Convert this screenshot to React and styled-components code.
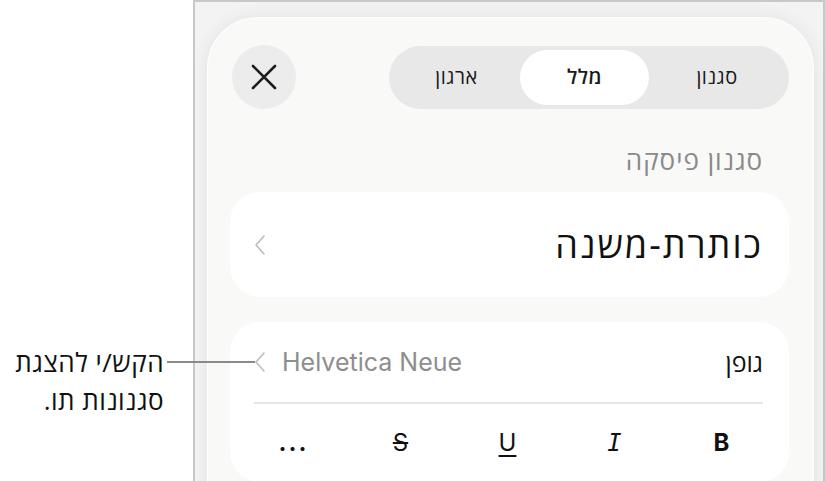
import * as React from 'react';
import styled, { createGlobalStyle } from 'styled-components';

const GlobalStyle = createGlobalStyle`
  html, body {
    margin: 0;
    padding: 0;
    background: #fff;
  }
  body {
    font-family: "Open Sans", "Liberation Sans", "DejaVu Sans", sans-serif;
    color: #111;
  }
`;

const Page = styled.div`
  position: relative;
  width: 825px;
  height: 481px;
  overflow: hidden;
  display: flex;
`;

const Frame = styled.div`
  margin-left: 193px;
  width: 626px;
  height: 500px;
  border: 2px solid #c8c8c8;
  border-bottom: none;
  background: #f3f3f3;
  padding: 15px 9px 0 12px;
  box-sizing: content-box;
`;

const Panel = styled.div`
  direction: rtl;
  height: 520px;
  background: #f9f9f8;
  border-radius: 50px;
  border: 1px solid #fff;
  box-shadow: 0 0 18px rgba(0, 0, 0, 0.07);
  padding: 27px 24px 0 22px;
  display: flex;
  flex-direction: column;
`;

const Header = styled.div`
  height: 64px;
  display: flex;
  align-items: center;
  justify-content: space-between;
`;

const Segmented = styled.div`
  width: 400px;
  height: 63px;
  border-radius: 32px;
  background: #e8e8e8;
  display: grid;
  grid-template-columns: 136px 129px 1fr;
  align-items: center;
  padding: 0 4px;
  box-sizing: border-box;
`;

const Tab = styled.div`
  height: 55px;
  border-radius: 28px;
  display: flex;
  align-items: center;
  justify-content: center;
  font-size: 20px;
  line-height: 1;
  letter-spacing: 0.5px;
  color: #1a1a1a;
  background: ${(p) => (p.$active ? '#fff' : 'transparent')};
  font-weight: ${(p) => (p.$active ? 600 : 400)};
`;

const CloseButton = styled.div`
  width: 64px;
  height: 64px;
  margin-left: 2px;
  border-radius: 50%;
  background: #ececec;
  display: flex;
  align-items: center;
  justify-content: center;
`;

const SectionLabel = styled.div`
  margin: 36px 26px 0 0;
  font-size: 26px;
  letter-spacing: 1px;
  color: #8a8a8a;
  height: 30px;
  line-height: 30px;
`;

const Card = styled.div`
  background: #fff;
  border-radius: 30px;
  padding: 0 26px 0 24px;
  margin-top: ${(p) => p.$top}px;
`;

const StyleRow = styled.div`
  height: 105px;
  display: flex;
  align-items: center;
  justify-content: space-between;
  font-size: 36px;
  letter-spacing: 2px;
  line-height: 1;
  color: #111;
`;

const FontRow = styled.div`
  height: 80px;
  display: flex;
  align-items: center;
  justify-content: space-between;
  border-bottom: 2px solid #e6e6e6;
  font-size: 25px;
  line-height: 1;
`;

const Value = styled.div`
  display: flex;
  align-items: center;
  gap: 16px;
  direction: ltr;
  font-family: Inter, "Liberation Sans", sans-serif;
  font-size: 25px;
  color: #8e8e8e;
`;

const FormatRow = styled.div`
  direction: ltr;
  display: grid;
  grid-template-columns: repeat(5, 1fr);
  margin: 0 -12px 0 -14px;
  height: 78px;
  align-items: center;
`;

const FormatButton = styled.div`
  text-align: center;
  font-size: 24px;
  line-height: 1;
  color: #111;
  font-family: ${(p) => p.$font || 'Inter, "Liberation Sans", sans-serif'};
  font-weight: ${(p) => (p.$bold ? 700 : 400)};
  font-style: ${(p) => (p.$italic ? 'italic' : 'normal')};
  text-decoration: ${(p) => p.$deco || 'none'};
  text-decoration-thickness: 2px;
  text-underline-offset: 4px;
  letter-spacing: ${(p) => (p.$spaced ? '2px' : 'normal')};
`;

const Callout = styled.div`
  position: absolute;
  left: 0;
  top: 343px;
  width: 164px;
  direction: rtl;
  text-align: right;
  font-size: 26px;
  letter-spacing: 0.5px;
  line-height: 38px;
  color: #111;
`;

const Leader = styled.div`
  position: absolute;
  left: 167px;
  top: 361px;
  width: 88px;
  height: 2px;
  background: #8a8a8a;
`;

const Chevron = ({ color = '#bcbcbc' }) => (
  <svg width="12" height="22" viewBox="0 0 12 22">
    <path d="M10 2 L2 11 L10 20" fill="none" stroke={color} strokeWidth="1.6" strokeLinecap="round" strokeLinejoin="round" />
  </svg>
);

const CloseIcon = () => (
  <svg width="28" height="28" viewBox="0 0 28 28">
    <path d="M3 3 L25 25 M25 3 L3 25" stroke="#1c1c1c" strokeWidth="2.6" strokeLinecap="round" />
  </svg>
);

export default function App() {
  return (
    <Page>
      <GlobalStyle />
      <Frame>
        <Panel>
          <Header>
            <Segmented>
              <Tab>סגנון</Tab>
              <Tab $active>מלל</Tab>
              <Tab>ארגון</Tab>
            </Segmented>
            <CloseButton>
              <CloseIcon />
            </CloseButton>
          </Header>

          <SectionLabel>סגנון פיסקה</SectionLabel>

          <Card $top={17}>
            <StyleRow>
              <span>כותרת-משנה</span>
              <Chevron />
            </StyleRow>
          </Card>

          <Card $top={25}>
            <FontRow>
              <span>גופן</span>
              <Value>
                <Chevron />
                <span>Helvetica Neue</span>
              </Value>
            </FontRow>
            <FormatRow>
              <FormatButton $bold $spaced>...</FormatButton>
              <FormatButton $deco="line-through">S</FormatButton>
              <FormatButton $deco="underline">U</FormatButton>
              <FormatButton $italic $font='"DejaVu Sans Mono", "Liberation Mono", monospace'>I</FormatButton>
              <FormatButton $bold>B</FormatButton>
            </FormatRow>
          </Card>
        </Panel>
      </Frame>

      <Callout>
        הקש/י להצגת
        <br />
        סגנונות תו.
      </Callout>
      <Leader />
    </Page>
  );
}
